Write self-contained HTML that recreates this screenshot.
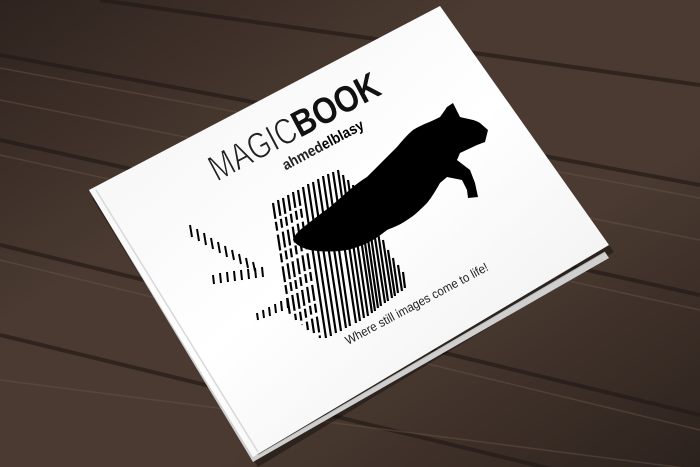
<!DOCTYPE html>
<html><head><meta charset="utf-8"><style>
html,body{margin:0;padding:0;width:700px;height:467px;overflow:hidden;background:#3f3029}
svg{display:block}
text{font-family:"Liberation Sans",sans-serif}
</style></head><body>
<svg width="700" height="467" viewBox="0 0 700 467">
<defs>
<linearGradient id="wood" x1="0" y1="0" x2="1" y2="1">
<stop offset="0" stop-color="#2e231e"/><stop offset="0.35" stop-color="#4a3a31"/><stop offset="0.65" stop-color="#4a3a31"/><stop offset="1" stop-color="#2c221d"/>
</linearGradient>
<linearGradient id="cover" x1="0" y1="0" x2="1" y2="1">
<stop offset="0" stop-color="#f2f2f2"/><stop offset="0.5" stop-color="#ffffff"/><stop offset="1" stop-color="#eaeaea"/>
</linearGradient>
</defs>
<rect width="700" height="467" fill="url(#wood)"/>
<g stroke="#241b17" stroke-width="4" opacity="0.7" fill="none">
<path d="M0,55 L700,185"/><path d="M0,140 L700,295"/><path d="M0,245 L700,415"/><path d="M0,335 L700,505"/><path d="M100,0 L700,85"/>
</g>
<g stroke="#6a5648" stroke-width="1.5" opacity="0.45" fill="none">
<path d="M0,68 L700,198"/><path d="M0,155 L700,310"/><path d="M0,260 L700,430"/><path d="M0,100 L700,240"/><path d="M0,380 L700,470"/>
</g>
<polygon points="92,198 440,14 614,252 258,467" fill="#000" opacity="0.35"/>
<polygon points="89,190 95,187 258,455 605,252 609,258 253,462" fill="#cfcfcf"/>
<polygon points="89,190 440,6 609,245 253,457" fill="url(#cover)"/>
<line x1="96" y1="190" x2="258" y2="452" stroke="#d8d8d8" stroke-width="1.5"/>
<line x1="258" y1="455" x2="605" y2="252" stroke="#bbb" stroke-width="1"/>
<g transform="translate(217,182) rotate(-28)">
<text x="0" y="0" font-size="37" font-weight="normal" fill="#222" textLength="94" lengthAdjust="spacingAndGlyphs" stroke="#fff" stroke-width="0.8">MAGIC</text>
<text x="94" y="0" font-size="37" font-weight="bold" fill="#111" textLength="94" lengthAdjust="spacingAndGlyphs">BOOK</text>
<text x="66" y="22" font-size="15" font-weight="bold" fill="#222" textLength="90" lengthAdjust="spacingAndGlyphs">ahmed<tspan fill="#000">elblasy</tspan></text>
</g>
<g stroke="#000" stroke-width="2.2" fill="none">
<path stroke-dasharray="16 3 9 4" d="M273,203L290,315M278,200L296,320M283,198L302,325M288,195L308,330M293,192L314,333M298,190L320,338"/>
<path d="M303,187L326,338M308,184L331,336M313,182L336,333M318,179L341,331M323,176L346,328M328,174L350,326M333,172L356,323M338,170L360,321M343,175L364,318M348,180L368,316M353,185L372,313M358,195L375,311M363,205L378,308M368,215L381,306M373,225L385,303M378,232L388,301M383,240L392,298M388,250L395,296M393,258L398,293M398,265L402,291M403,272L405,288"/>
<path stroke-width="2" d="M190,225l2,12M197,229l2,12M204,233l2,12M211,238l2,11M218,242l2,11M225,246l2,11M232,250l2,10M239,254l2,10M246,258l2,10M253,262l2,9M213,275l1,9M220,273l1,10M227,272l1,10M234,271l1,10M241,270l1,10M248,269l1,10M255,268l1,10M262,267l1,10M257,313l1,7M263,310l1,8M269,307l1,9M275,304l1,9M281,301l1,10M287,298l1,10"/>
</g>
<path d="M453,103 L460,117 C468,119 476,120 480,123 L488,130 L485,142 L477,145 L460,153 L457,160 L470,170 L475,183 L478,197 L468,198 L467,190 L462,180 L447,177 L440,183 C436,190 432,197 427,203 C420,210 414,216 407,220 C400,225 394,227 387,230 C382,234 378,237 373,240 C364,245 356,248 347,250 C335,252 322,252 310,250 C302,248 296,245 293,240 C294,236 297,233 300,230 C310,222 320,214 330,207 C338,200 346,193 353,187 C358,183 362,180 367,177 C374,170 381,163 387,157 C391,153 394,150 397,147 C402,141 407,135 413,130 C418,127 422,125 427,123 C432,121 436,119 440,117 C443,113 445,110 447,107 Z" fill="#000"/>
<g transform="translate(348,345) rotate(-28)">
<text x="0" y="0" font-size="12.5" fill="#222" textLength="160" lengthAdjust="spacingAndGlyphs">Where still images come to life!</text>
</g>
</svg>
</body></html>
